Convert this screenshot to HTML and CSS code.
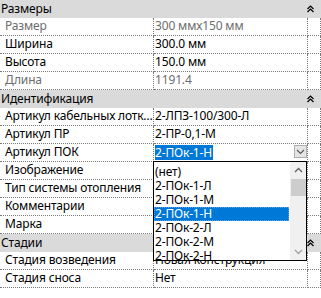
FILE: index.html
```html
<!DOCTYPE html>
<html lang="ru">
  <head>
    <meta charset="UTF-8" />
    <title>Свойства</title>
    <link rel="stylesheet" href="styles.css">
  </head>
  <body>
    <div class="props">
      <div class="group">
        <span>Размеры</span>
        <svg class="collapse" width="7" height="8" viewBox="0 0 7 8"><path d="M0.5 4 L3.5 1 L6.5 4 M0.5 7 L3.5 4 L6.5 7" fill="none" stroke="#000" stroke-width="1.2"/></svg>
      </div>
      <div class="row muted"><div class="name">Размер</div><div class="value">300 ммх150 мм</div><div class="tail"></div></div>
      <div class="row"><div class="name">Ширина</div><div class="value">300.0 мм</div><div class="tail"></div></div>
      <div class="row"><div class="name">Высота</div><div class="value">150.0 мм</div><div class="tail"></div></div>
      <div class="row muted"><div class="name">Длина</div><div class="value">1191.4</div><div class="tail"></div></div>

      <div class="group">
        <span>Идентификация</span>
        <svg class="collapse" width="7" height="8" viewBox="0 0 7 8"><path d="M0.5 4 L3.5 1 L6.5 4 M0.5 7 L3.5 4 L6.5 7" fill="none" stroke="#000" stroke-width="1.2"/></svg>
      </div>
      <div class="row"><div class="name">Артикул кабельных лотков</div><div class="value">2-ЛПЗ-100/300-Л</div><div class="tail"></div></div>
      <div class="row"><div class="name">Артикул ПР</div><div class="value">2-ПР-0,1-М</div><div class="tail"></div></div>
      <div class="row">
        <div class="name">Артикул ПОК</div>
        <div class="value editing">
          <span class="sel-text">2-ПОк-1-Н</span>
          <span class="drop-btn">
            <svg width="9" height="6" viewBox="0 0 9 6"><path d="M1 1 L4.5 4.5 L8 1" fill="none" stroke="#555" stroke-width="1.1"/></svg>
          </span>
          <div class="drop-list">
            <ul class="items">
              <li>(нет)</li>
              <li>2-ПОк-1-Л</li>
              <li>2-ПОк-1-М</li>
              <li class="active">2-ПОк-1-Н</li>
              <li>2-ПОк-2-Л</li>
              <li>2-ПОк-2-М</li>
              <li>2-ПОк-2-Н</li>
            </ul>
            <div class="scrollbar">
              <div class="arrow">
                <svg width="9" height="6" viewBox="0 0 9 6"><path d="M1 5 L4.5 1.5 L8 5" fill="none" stroke="#606060" stroke-width="1.3"/></svg>
              </div>
              <div class="thumb"></div>
              <div class="track"></div>
              <div class="arrow">
                <svg width="9" height="6" viewBox="0 0 9 6"><path d="M1 1 L4.5 4.5 L8 1" fill="none" stroke="#a0a0a0" stroke-width="1.3"/></svg>
              </div>
            </div>
          </div>
        </div>
        <div class="tail"></div>
      </div>
      <div class="row"><div class="name">Изображение</div><div class="value"></div><div class="tail"></div></div>
      <div class="row"><div class="name">Тип системы отопления</div><div class="value"></div><div class="tail"></div></div>
      <div class="row"><div class="name">Комментарии</div><div class="value"></div><div class="tail"></div></div>
      <div class="row"><div class="name">Марка</div><div class="value"></div><div class="tail"></div></div>

      <div class="group">
        <span>Стадии</span>
        <svg class="collapse" width="7" height="8" viewBox="0 0 7 8"><path d="M0.5 4 L3.5 1 L6.5 4 M0.5 7 L3.5 4 L6.5 7" fill="none" stroke="#000" stroke-width="1.2"/></svg>
      </div>
      <div class="row"><div class="name">Стадия возведения</div><div class="value">Новая конструкция</div><div class="tail"></div></div>
      <div class="row"><div class="name">Стадия сноса</div><div class="value">Нет</div><div class="tail"></div></div>
    </div>
  </body>
</html>
```

FILE: styles.css
```css
body {
  margin: 0;
  background: #ffffff;
  font-family: 'Noto Sans', 'Open Sans', sans-serif;
  font-size: 12px;
  letter-spacing: -0.15px;
  color: #000000;
}

.props {
  width: 321px;
}

.group {
  height: 18px;
  background: #dadada;
  display: flex;
  align-items: center;
  justify-content: space-between;
  padding: 0 7px 0 1px;
  box-sizing: border-box;
}

.group span {
  line-height: 18px;
}

.collapse {
  display: block;
}

.row {
  display: grid;
  grid-template-columns: 154px 154px 13px;
  height: 18px;
}

.row > div {
  border-bottom: 1px dotted #7a7a7a;
  border-right: 1px dotted #7a7a7a;
  box-sizing: border-box;
  line-height: 16px;
  white-space: nowrap;
  overflow: hidden;
}

.name {
  padding-left: 5px;
  text-overflow: ellipsis;
}

.value {
  padding-left: 1px;
}

.muted .name,
.muted .value {
  color: #6d6d6d;
}

.value.editing {
  position: relative;
  overflow: visible;
  display: flex;
  align-items: flex-start;
}

.sel-text {
  background: #0078d7;
  color: #ffffff;
  line-height: 15px;
  margin-top: 1px;
  padding-right: 1px;
}

.drop-btn {
  margin-left: auto;
  margin-top: 1px;
  width: 13px;
  height: 13px;
  box-sizing: border-box;
  border: 1px solid #adadad;
  background: #e5e5e5;
  display: flex;
  align-items: center;
  justify-content: center;
}

.drop-list {
  position: absolute;
  top: 17px;
  left: -1px;
  width: 154px;
  height: 100px;
  box-sizing: border-box;
  border: 1px solid #000000;
  background: #ffffff;
  display: flex;
  z-index: 2;
  overflow: hidden;
}

.items {
  list-style: none;
  margin: 0;
  padding: 3px 0 0 0;
  flex: 1;
}

.items li {
  height: 14px;
  line-height: 14px;
  padding-left: 1px;
  margin-right: 1px;
}

.items li.active {
  background: #0078d7;
  color: #ffffff;
  outline: 1px dotted #5a9fe0;
  outline-offset: -1px;
}

.scrollbar {
  width: 16px;
  background: #f0f0f0;
  display: flex;
  flex-direction: column;
}

.arrow {
  height: 16px;
  display: flex;
  align-items: center;
  justify-content: center;
}

.thumb {
  height: 17px;
  margin: 1px 0 0 1px;
  background: #cdcdcd;
}

.track {
  flex: 1;
}
```
